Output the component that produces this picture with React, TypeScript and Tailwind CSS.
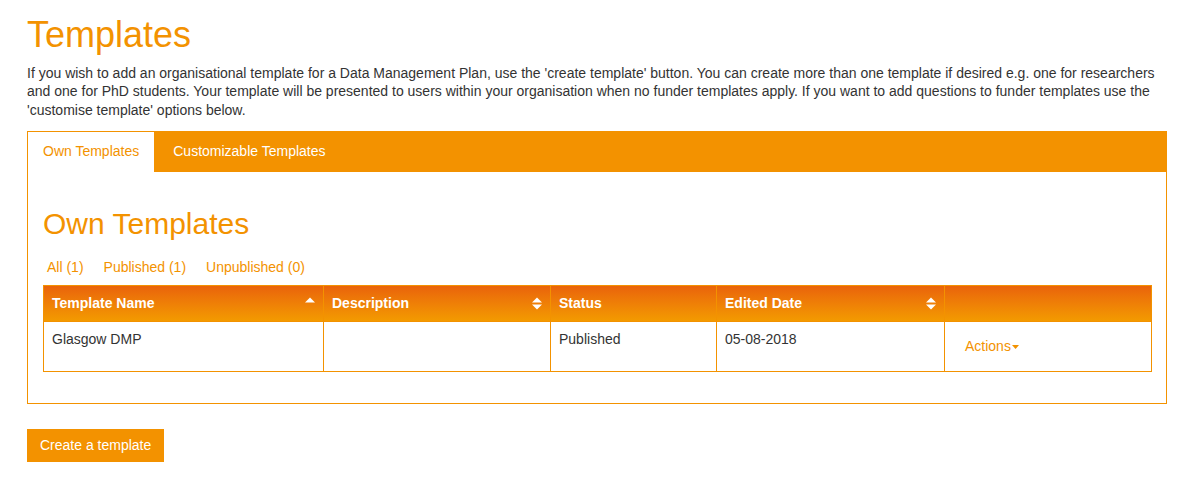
import React from "react";

const ORANGE = "#f39200";

function SortUp() {
  return (
    <svg width="10" height="6" viewBox="0 0 10 6" className="block">
      <path d="M0 5.5 L5 0.5 L10 5.5 Z" fill="#fff" />
    </svg>
  );
}

function SortBoth() {
  return (
    <svg width="10" height="13" viewBox="0 0 10 13" className="block">
      <path d="M0 5.5 L5 0.5 L10 5.5 Z" fill="#fff" />
      <path d="M0 7.5 L5 12.5 L10 7.5 Z" fill="#fff" />
    </svg>
  );
}

export default function App() {
  const font = { fontFamily: '"Liberation Sans", Arial, sans-serif' };
  return (
    <div className="bg-white w-[1196px] h-[488px] overflow-hidden" style={font}>
      <div className="ml-[27px] w-[1140px] pt-[15px]">
        <h1 className="text-[36px] leading-[40px] text-[#f39200] font-normal">Templates</h1>
        <p className="mt-[9px] text-[14px] leading-[18.3px] text-[#333333] w-[1142px]">
          If you wish to add an organisational template for a Data Management Plan, use the 'create template' button. You can create more than one template if desired e.g. one for researchers and one for PhD students. Your template will be presented to users within your organisation when no funder templates apply. If you want to add questions to funder templates use the 'customise template' options below.
        </p>

        <div className="mt-[12px] border border-[#f39200]">
          <div className="flex h-[40px] bg-[#f39200]">
            <div className="bg-white h-[40px] px-[15px] flex items-center text-[14px] text-[#f39200]">Own Templates</div>
            <div className="h-[40px] pl-[19px] pr-[15px] flex items-center text-[14px] text-white">Customizable Templates</div>
          </div>
          <div className="px-[15px] pt-[35px] pb-[31px]">
            <h2 className="text-[30px] leading-[33px] text-[#f39200] font-normal">Own Templates</h2>
            <div className="mt-[17px] flex gap-[20px] pl-[4px] text-[14px] leading-[20px] text-[#f39200]">
              <span>All (1)</span>
              <span>Published (1)</span>
              <span>Unpublished (0)</span>
            </div>
            <table className="mt-[8px] w-[1108px] border-collapse table-fixed text-[14px]">
              <colgroup>
                <col style={{ width: 280 }} />
                <col style={{ width: 227 }} />
                <col style={{ width: 166 }} />
                <col style={{ width: 228 }} />
                <col style={{ width: 207 }} />
              </colgroup>
              <thead>
                <tr className="h-[36px] bg-gradient-to-b from-[#e9610b] to-[#f39a00] text-white font-bold">
                  <th className="border border-[#f39200] px-[8px] text-left align-middle">
                    <div className="flex items-center justify-between"><span>Template Name</span><span className="-mt-[6px]"><SortUp /></span></div>
                  </th>
                  <th className="border border-[#f39200] px-[8px] text-left align-middle">
                    <div className="flex items-center justify-between"><span>Description</span><SortBoth /></div>
                  </th>
                  <th className="border border-[#f39200] px-[8px] text-left align-middle">Status</th>
                  <th className="border border-[#f39200] px-[8px] text-left align-middle">
                    <div className="flex items-center justify-between"><span>Edited Date</span><SortBoth /></div>
                  </th>
                  <th className="border border-[#f39200] px-[8px]"></th>
                </tr>
              </thead>
              <tbody>
                <tr className="h-[50px] text-[#333333]">
                  <td className="border border-[#f39200] px-[8px] pt-[7px] align-top leading-[20px]">Glasgow DMP</td>
                  <td className="border border-[#f39200] px-[8px] pt-[7px] align-top"></td>
                  <td className="border border-[#f39200] px-[8px] pt-[7px] align-top leading-[20px]">Published</td>
                  <td className="border border-[#f39200] px-[8px] pt-[7px] align-top leading-[20px]">05-08-2018</td>
                  <td className="border border-[#f39200] pl-[20px] pt-[14px] align-top leading-[20px]">
                    <span className="inline-flex items-center text-[#f39200]">
                      Actions
                      <svg width="7" height="4" viewBox="0 0 7 4" className="ml-[1px] mt-[2px]"><path d="M0 0 L7 0 L3.5 4 Z" fill={ORANGE} /></svg>
                    </span>
                  </td>
                </tr>
              </tbody>
            </table>
          </div>
        </div>

        <button className="mt-[25px] h-[33px] px-[13px] bg-[#f39200] text-white text-[14px]">Create a template</button>
      </div>
    </div>
  );
}
